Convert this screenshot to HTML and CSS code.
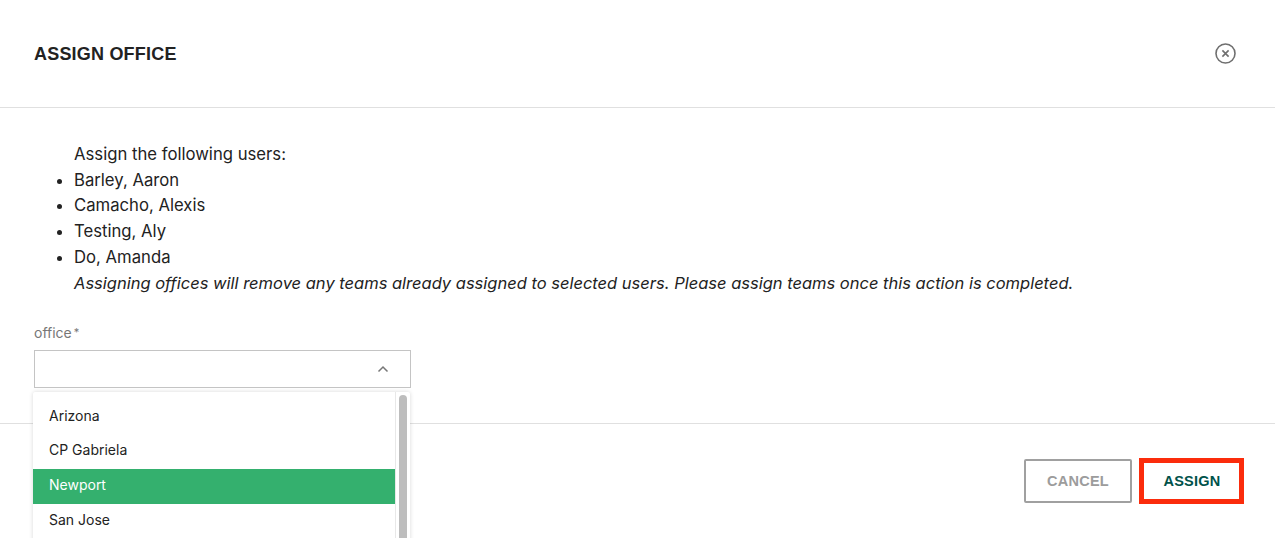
FILE: index.html
```html
<!DOCTYPE html>
<html lang="en">
<head>
<meta charset="utf-8">
<title>Assign Office</title>
<link rel="stylesheet" href="styles.css">
</head>
<body>
<div class="modal">
  <header class="modal-header">
    <h1 class="modal-title">ASSIGN OFFICE</h1>
    <button class="close-btn" aria-label="Close">
      <svg width="22" height="22" viewBox="0 0 22 22" fill="none" stroke="#6f6f6f">
        <circle cx="10.5" cy="10.5" r="9.5" stroke-width="1.6"/>
        <path d="M7.4 7.4l6.2 6.2M13.6 7.4l-6.2 6.2" stroke-width="1.6"/>
      </svg>
    </button>
  </header>
  <main class="modal-body">
    <div class="message">
      <div>Assign the following users:</div>
      <ul class="user-list">
        <li>Barley, Aaron</li>
        <li>Camacho, Alexis</li>
        <li>Testing, Aly</li>
        <li>Do, Amanda</li>
      </ul>
      <em class="note">Assigning offices will remove any teams already assigned to selected users. Please assign teams once this action is completed.</em>
    </div>
    <div class="field">
      <label class="field-label">office<span class="req">*</span></label>
      <div class="select">
        <svg class="chevron" width="12" height="8" viewBox="0 0 12 8" fill="none" stroke="#777" stroke-width="1.5">
          <path d="M1.5 6.5L6 2l4.5 4.5"/>
        </svg>
      </div>
      <div class="menu">
        <ul class="options">
          <li class="option">Arizona</li>
          <li class="option">CP Gabriela</li>
          <li class="option selected">Newport</li>
          <li class="option">San Jose</li>
        </ul>
        <div class="scrolltrack"><div class="scrollthumb"></div></div>
      </div>
    </div>
  </main>
  <footer class="modal-footer">
    <button class="btn cancel">CANCEL</button>
    <button class="btn assign">ASSIGN</button>
  </footer>
</div>
</body>
</html>
```
FILE: styles.css
```css
* { box-sizing: border-box; }
html, body { margin: 0; height: 100%; overflow: hidden; background: #fff; }
body { font-family: "Inter", "Liberation Sans", sans-serif; color: #222; }
.modal { height: 538px; display: flex; flex-direction: column; }
.modal-header {
  height: 108px; flex: none; border-bottom: 1px solid #e0e0e0;
  display: flex; align-items: center; justify-content: space-between;
  padding: 0 38px 0 34px;
}
.modal-title {
  margin: 0; font: 700 18px/1 "Liberation Sans", Arial, sans-serif; color: #222; letter-spacing: 0.2px;
}
.close-btn { border: 0; background: none; padding: 0; display: flex; }
.modal-body { height: 315px; flex: none; padding: 34px 34px 0; }
.message { font-size: 16.7px; line-height: 25.7px; padding-left: 40px; color: #222; }
.note { font-size: 16.5px; }
.user-list { margin: 0; padding: 0; list-style: disc; }
.field { position: relative; width: 377px; margin-top: 27px; }
.field-label { display: block; font-size: 14px; line-height: 18px; color: #777; }
.req { font-size: 11px; margin-left: 2px; vertical-align: 2px; }
.select {
  height: 38px; margin-top: 8px; border: 1px solid #c4c4c4; background: #fff;
  display: flex; align-items: center; justify-content: flex-end; padding-right: 21px;
}
.menu {
  position: absolute; z-index: 2; left: -1px; top: 69px; width: 377px; height: 160px;
  background: #fff; display: flex; box-shadow: 0 0 4px rgba(0,0,0,.16);
  border-radius: 2px 2px 0 0; overflow: hidden;
}
.options { flex: 1; margin: 0; padding: 7.6px 0 0; list-style: none; border-right: 1px solid #e8e8e8; }
.option { height: 34.6px; padding-left: 16px; font-size: 14px; line-height: 32px; color: #222; }
.option.selected { background: #34b06e; color: #fff; }
.scrolltrack { width: 14px; padding: 3px 3px 0 3px; }
.scrollthumb { width: 8px; height: 160px; background: #bdbdbd; border-radius: 4px; }
.modal-footer {
  flex: 1; border-top: 1px solid #e0e0e0;
  display: flex; justify-content: flex-end; gap: 7px;
  padding: 35px 31px 0 0; align-items: flex-start;
}
.btn {
  height: 44px; background: #fff; font: 700 14.5px/1 "Liberation Sans", Arial, sans-serif;
  padding: 0; letter-spacing: 0.25px;
}
.cancel { width: 108px; border: 2px solid #a0a0a0; color: #9c9c9c; border-radius: 2px; }
.assign { width: 105px; height: 46px; margin-top: -1px; padding-left: 1px; border: 5px solid #fb2c0c; color: #00524a; }
```
